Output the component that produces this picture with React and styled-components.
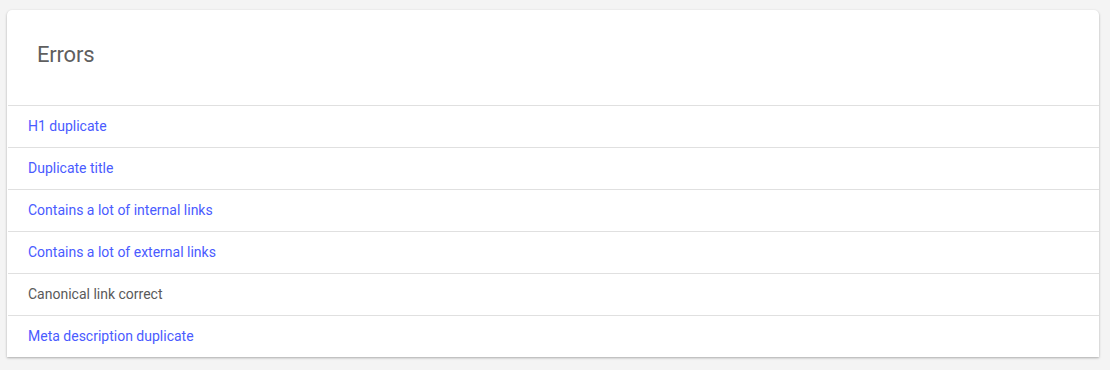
import React from "react";
import styled, { createGlobalStyle } from "styled-components";

const GlobalStyle = createGlobalStyle`
  html, body {
    margin: 0;
    padding: 0;
    background: #f4f4f4;
    font-family: Roboto, "Liberation Sans", Arial, sans-serif;
  }
`;

const Page = styled.div`
  padding: 10px 11px 13px 7px;
`;

const Card = styled.section`
  background: #fff;
  border-radius: 5px 5px 0 0;
  box-shadow: 0 1px 3px rgba(0, 0, 0, 0.2), 0 1px 2px rgba(0, 0, 0, 0.12);
  overflow: hidden;
`;

const Header = styled.header`
  height: 95px;
  display: flex;
  align-items: center;
  padding: 0 30px 6px;
  box-sizing: border-box;
`;

const Title = styled.h2`
  margin: 0;
  font-size: 22px;
  font-weight: 400;
  color: #5f5f5f;
  letter-spacing: -0.2px;
`;

const List = styled.ul`
  list-style: none;
  margin: 0 0 0 1px;
  padding: 0;
`;

const Item = styled.li`
  height: 42px;
  box-sizing: border-box;
  border-top: 1px solid #e0e0e0;
  display: flex;
  align-items: center;
  padding: 0 20px 2px;
  font-size: 14px;
  color: ${(p) => (p.$error ? "#4a5bff" : "#5a5a5a")};
`;

const items = [
  { label: "H1 duplicate", error: true },
  { label: "Duplicate title", error: true },
  { label: "Contains a lot of internal links", error: true },
  { label: "Contains a lot of external links", error: true },
  { label: "Canonical link correct", error: false },
  { label: "Meta description duplicate", error: true },
];

export default function App() {
  return (
    <>
      <GlobalStyle />
      <Page>
        <Card>
          <Header>
            <Title>Errors</Title>
          </Header>
          <List>
            {items.map((item) => (
              <Item key={item.label} $error={item.error}>
                {item.label}
              </Item>
            ))}
          </List>
        </Card>
      </Page>
    </>
  );
}
